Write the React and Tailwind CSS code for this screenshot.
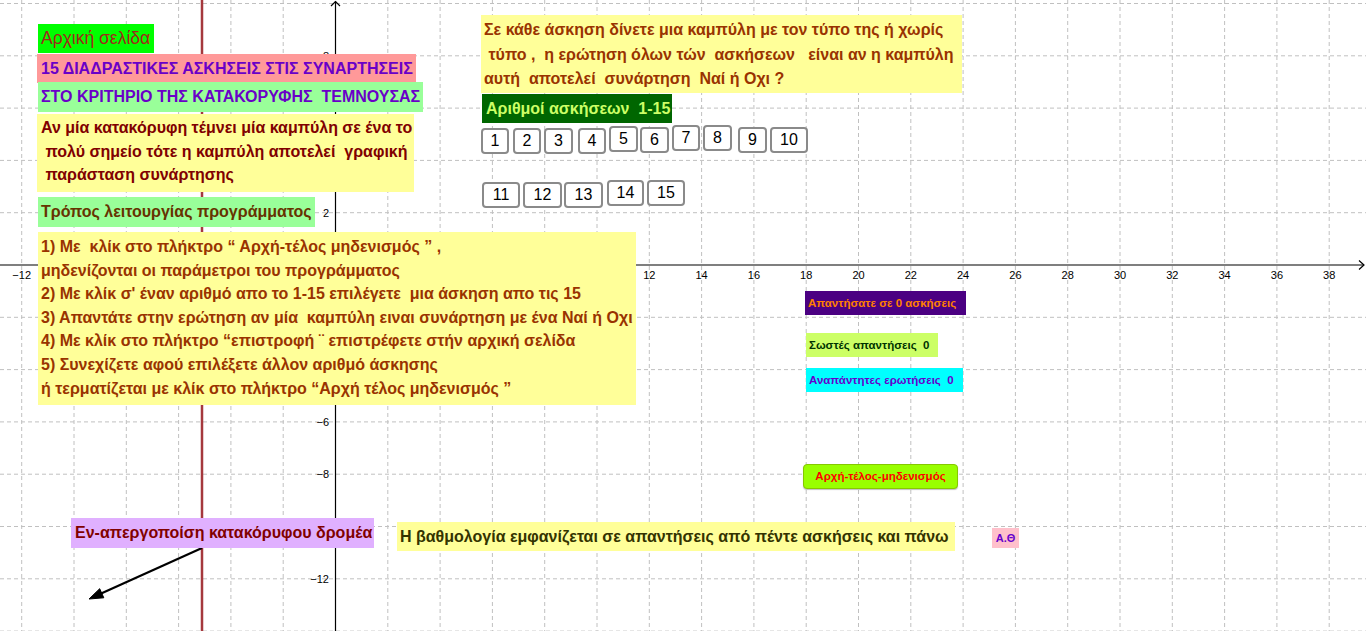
const OX = 335.5;
const OY = 265;
const S = 52.3;

function num(v) {
  return v < 0 ? `\u2212${-v}` : `${v}`;
}

// tick labels that are not hidden behind a box in the applet
const xTicks = [-6, 6, 7, 8, 9, 10, 11, 12, 13, 14, 15, 16, 17, 18, 19];
const yTicks = [-4, -1, 3, 4, 6];

function Grid() {
  const vx = [];
  for (let k = -6; k <= 19; k++) vx.push(k);
  const hy = [];
  for (let k = -5; k <= 7; k++) hy.push(k);

  return (
    <svg className="absolute inset-0" width="1366" height="631" viewBox="0 0 1366 631">
      {vx.map((k) =>
        k === 0 ? null : (
          <line key={`v${k}`} x1={OX + k * S} y1="0" x2={OX + k * S} y2="631" stroke="#c0c0c0" strokeWidth="1" strokeDasharray="4 3" />
        )
      )}
      {hy.map((k) =>
        k === 0 ? null : (
          <line key={`h${k}`} x1="0" y1={OY + k * S} x2="1366" y2={OY + k * S} stroke="#c0c0c0" strokeWidth="1" strokeDasharray="4 3" />
        )
      )}

      {/* axes */}
      <line x1="0" y1={OY} x2="1364" y2={OY} stroke="#000" strokeWidth="1.2" />
      <polyline points="1359,260.5 1364,265 1359,269.5" fill="none" stroke="#000" strokeWidth="1.2" />
      <line x1={OX} y1="1" x2={OX} y2="631" stroke="#000" strokeWidth="1.2" />
      <polyline points="331,6 335.5,1.5 340,6" fill="none" stroke="#000" strokeWidth="1.2" />

      {xTicks.map((k) => (
        <text key={`tx${k}`} x={OX + k * S} y="279" fontSize="11" textAnchor="middle" fill="#000" fontFamily="Liberation Sans, sans-serif">
          {num(2 * k)}
        </text>
      ))}
      {yTicks.map((k) => (
        <text key={`ty${k}`} x="329" y={OY + k * S + 4} fontSize="11" textAnchor="end" fill="#000" fontFamily="Liberation Sans, sans-serif">
          {num(-2 * k)}
        </text>
      ))}

      {/* vertical slider line */}
      <line x1="202" y1="0" x2="202" y2="631" stroke="#a5383d" strokeWidth="2.5" />

      {/* vector */}
      <line x1="202" y1="548" x2="100" y2="594" stroke="#000" strokeWidth="2.2" />
      <polygon points="89,599 103.8,597.8 99.7,588.7" fill="#000" stroke="#000" strokeWidth="1" />
    </svg>
  );
}

const row1 = [
  { n: '1', cls: 'ml-0 mt-[3px] w-[28px]' },
  { n: '2', cls: 'ml-[4px] mt-[3px] w-[28px]' },
  { n: '3', cls: 'ml-[3px] mt-[3px] w-[29px]' },
  { n: '4', cls: 'ml-[5px] mt-[3px] w-[28px]' },
  { n: '5', cls: 'ml-[3px] mt-[1px] w-[29px]' },
  { n: '6', cls: 'ml-[2px] mt-[2px] w-[29px]' },
  { n: '7', cls: 'ml-[3px] mt-0 w-[28px]' },
  { n: '8', cls: 'ml-[3px] mt-0 w-[29px]' },
  { n: '9', cls: 'ml-[6px] mt-[2px] w-[29px]' },
  { n: '10', cls: 'ml-[3px] mt-[2px] w-[38px]' },
];

const row2 = [
  { n: '11', cls: 'ml-[1px] mt-[2px] w-[38px]' },
  { n: '12', cls: 'ml-[3px] mt-[2px] w-[39px]' },
  { n: '13', cls: 'ml-[2px] mt-[2px] w-[39px]' },
  { n: '14', cls: 'ml-[4px] mt-0 w-[37px]' },
  { n: '15', cls: 'ml-[3px] mt-0 w-[38px]' },
];

function NumButton({ n, cls }) {
  return (
    <button
      className={`${cls} h-[26px] shrink-0 rounded-[4px] border-2 border-[#8a8a8a] bg-white text-[16px] leading-none text-black flex items-center justify-center`}
    >
      {n}
    </button>
  );
}

const instructions = [
  '1) Με  κλίκ στο πλήκτρο \u201c Αρχή-τέλος μηδενισμός \u201d ,',
  'μηδενίζονται οι παράμετροι του προγράμματος',
  "2) Με κλίκ σ' έναν αριθμό απο το 1-15 επιλέγετε  μια άσκηση απο τις 15",
  '3) Απαντάτε στην ερώτηση αν μία  καμπύλη ειναι συνάρτηση με ένα Ναί ή Οχι',
  '4) Με κλίκ στο πλήκτρο \u201cεπιστροφή \u00a8 επιστρέφετε στήν αρχική σελίδα',
  '5) Συνεχίζετε αφού επιλέξετε άλλον αριθμό άσκησης',
  'ή τερματίζεται με κλίκ στο πλήκτρο \u201cΑρχή τέλος μηδενισμός \u201d',
];

export default function App() {
  return (
    <div className="relative w-[1366px] h-[631px] overflow-hidden bg-white font-['Liberation_Sans',Arial,sans-serif] whitespace-pre">
      <Grid />

      {/* left column */}
      <div className="absolute left-[37px] top-[24px] flex flex-col items-start">
        <div className="ml-[1px] h-[29px] w-[116px] bg-[#00ff00] pl-[3px] text-[17.5px] leading-[29px] text-[#a0281a]">
          Αρχική σελίδα
        </div>
        <div className="mt-[1px] h-[29px] w-[379px] bg-[#ff9999] pl-[4px] text-[16px] font-bold leading-[29px] text-[#6a00c8]">
          15 ΔΙΑΔΡΑΣΤΙΚΕΣ ΑΣΚΗΣΕΙΣ ΣΤΙΣ ΣΥΝΑΡΤΗΣΕΙΣ
        </div>
        <div className="-mt-[1px] ml-[1px] h-[30px] w-[385px] bg-[#99ff99] pl-[3px] text-[16px] font-bold leading-[30px] text-[#6a00c8]">
          ΣΤΟ ΚΡΙΤΗΡΙΟ ΤΗΣ ΚΑΤΑΚΟΡΥΦΗΣ  ΤΕΜΝΟΥΣΑΣ
        </div>
        <div className="mt-[2px] h-[78px] w-[377px] bg-[#ffff99] pl-[4px] pt-[2px] text-[16px] font-bold leading-[23.5px] text-[#800000]">
          <div>Αν μία κατακόρυφη τέμνει μία καμπύλη σε ένα το</div>
          <div> πολύ σημείο τότε η καμπύλη αποτελεί  γραφική</div>
          <div> παράσταση συνάρτησης</div>
        </div>
        <div className="mt-[5px] ml-[1px] h-[30px] w-[277px] bg-[#99ff99] pl-[3px] text-[16px] font-bold leading-[30px] text-[#663300]">
          Τρόπος λειτουργίας προγράμματος
        </div>
        <div className="mt-[5px] ml-[1px] h-[173px] w-[598px] bg-[#ffff99] pl-[3px] pt-[3px] text-[16px] font-bold leading-[23.6px] text-[#993300]">
          {instructions.map((t) => (
            <div key={t}>{t}</div>
          ))}
        </div>
      </div>

      {/* top right column */}
      <div className="absolute left-[481px] top-[15px] flex flex-col items-start">
        <div className="h-[78px] w-[481px] bg-[#ffff99] pl-[3px] pt-[3px] text-[16px] font-bold leading-[24.5px] text-[#993300]">
          <div>Σε κάθε άσκηση δίνετε μια καμπύλη με τον τύπο της ή χωρίς</div>
          <div> τύπο ,  η ερώτηση όλων τών  ασκήσεων   είναι αν η καμπύλη</div>
          <div>αυτή  αποτελεί  συνάρτηση  Ναί ή Οχι ?</div>
        </div>
        <div className="mt-[1px] ml-[1px] h-[29px] w-[190px] bg-[#006600] pl-[4px] text-[16px] font-bold leading-[29px] text-[#ccff66]">
          Αριθμοί ασκήσεων  1-15
        </div>
        <div className="mt-[2px] flex items-start">
          {row1.map((b) => (
            <NumButton key={b.n} {...b} />
          ))}
        </div>
        <div className="mt-[26px] flex items-start">
          {row2.map((b) => (
            <NumButton key={b.n} {...b} />
          ))}
        </div>
      </div>

      {/* counters */}
      <div className="absolute left-[805px] top-[291px] flex flex-col items-start text-[11.5px] font-bold">
        <div className="h-[24px] w-[161px] bg-[#4b0082] pl-[3px] leading-[24px] text-[#ff8000]">Απαντήσατε σε 0 ασκήσεις</div>
        <div className="mt-[18px] ml-[1px] h-[24px] w-[132px] bg-[#ccff66] pl-[3px] leading-[24px] text-[#003300]">Σωστές απαντήσεις  0</div>
        <div className="mt-[11px] ml-[1px] h-[24px] w-[157px] bg-[#00ffff] pl-[3px] leading-[24px] text-[#6600cc]">Αναπάντητες ερωτήσεις  0</div>
        <button className="mt-[72px] -ml-[2px] h-[25px] w-[155px] rounded-[4px] border border-[#86c800] bg-[#99ff00] text-center text-[11.5px] font-bold leading-[23px] text-[#ff0000] shadow-[0_1px_1px_rgba(0,0,0,0.25)]">
          Αρχή-τέλος-μηδενισμός
        </button>
      </div>

      {/* bottom labels */}
      <div className="absolute left-[71px] top-[518px] h-[30px] w-[303px] bg-[#e0b0ff] pl-[4px] text-[16px] font-bold leading-[30px] text-[#800000]">
        Εν-απεργοποίση κατακόρυφου δρομέα
      </div>
      <div className="absolute left-[397px] top-[522px] h-[29px] w-[558px] bg-[#ffff99] pl-[3px] text-[16px] font-bold leading-[29px] text-[#333300]">
        Η βαθμολογία εμφανίζεται σε απαντήσεις από πέντε ασκήσεις και πάνω
      </div>
      <div className="absolute left-[992px] top-[528px] h-[20px] w-[27px] bg-[#ffc0cb] text-center text-[11px] font-bold leading-[20px] text-[#6600cc]">
        Α.Θ
      </div>
    </div>
  );
}
